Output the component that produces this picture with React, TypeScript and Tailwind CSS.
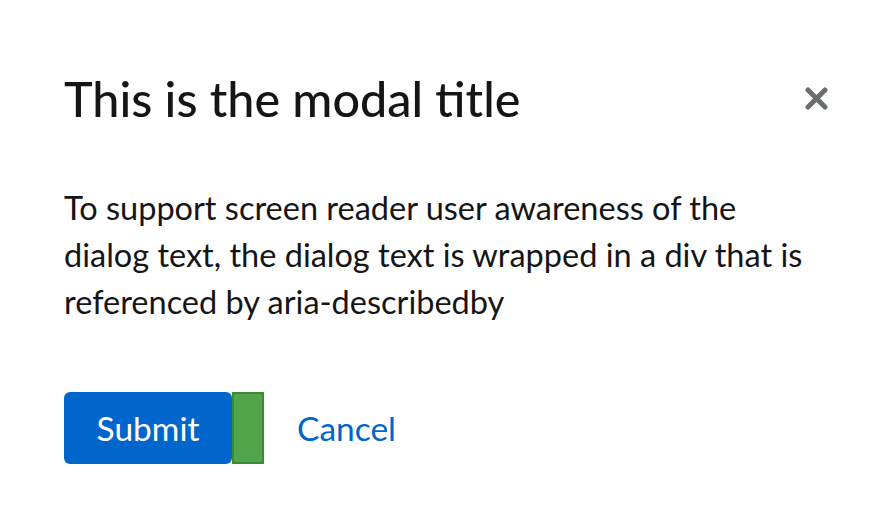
export default function App() {
  return (
    <div className="w-[892px] h-[528px] bg-white overflow-hidden" style={{ fontFamily: 'Lato, "Noto Sans", sans-serif' }}>
      <div className="flex flex-col pl-16 pr-[60px] pt-[66px]">
        {/* Header */}
        <div className="flex items-center justify-between">
          <h1 className="text-[48.5px] leading-[64px] text-[#151515] font-medium">This is the modal title</h1>
          <button aria-label="Close" className="w-[24px] h-[24px] mr-[4px] flex items-center justify-center text-[#6a6e73]">
            <svg width="23" height="23" viewBox="0 0 23 23">
              <path d="M3 3L20 20M20 3L3 20" stroke="currentColor" strokeWidth="5" strokeLinecap="round" />
            </svg>
          </button>
        </div>

        {/* Body */}
        <div className="mt-[54px] w-[760px] text-[32.5px] leading-[47px] text-[#151515]">
          To support screen reader user awareness of the dialog text, the dialog text is wrapped in a div that is referenced by aria-describedby
        </div>

        {/* Footer */}
        <div className="mt-[67px] flex items-center">
          <button className="h-[72px] w-[168px] rounded-md bg-[#0066cc] text-white text-[33.5px]">Submit</button>
          <div className="h-[72px] w-[32px] bg-[#52a44a] border-2 border-[#3b8a34]" />
          <button className="ml-[33px] text-[33.5px] text-[#0066cc]">Cancel</button>
        </div>
      </div>
    </div>
  );
}
